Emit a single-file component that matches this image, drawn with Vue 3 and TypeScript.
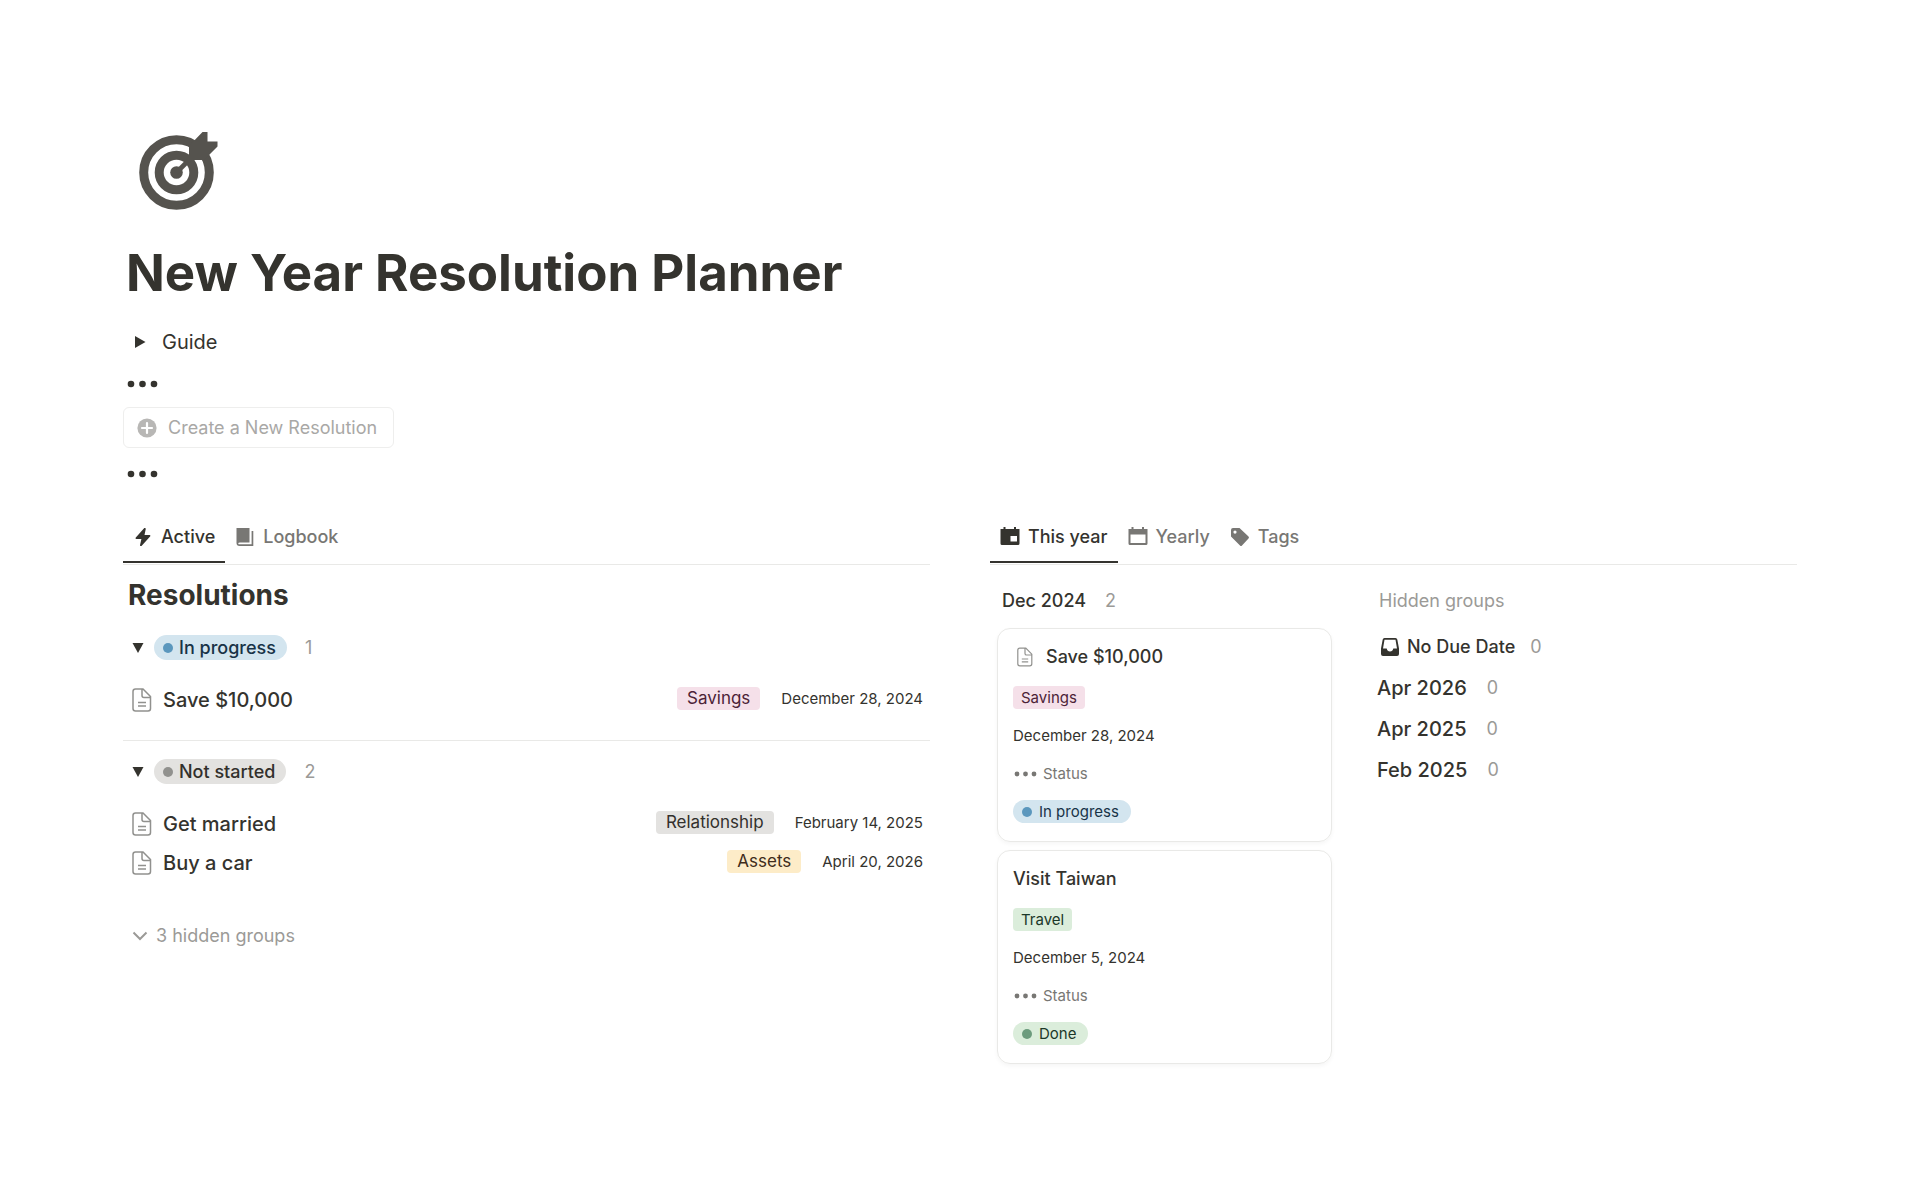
<script setup lang="ts">
interface Entry {
  title: string
  tag: string
  tone: string
  date: string
}

interface Group {
  status: string
  tone: string
  entries: Entry[]
}

interface Card extends Entry {
  hasPage: boolean
  status: string
  statusTone: string
}

const groups: Group[] = [
  {
    status: 'In progress',
    tone: 'blue',
    entries: [{ title: 'Save $10,000', tag: 'Savings', tone: 'pink', date: 'December 28, 2024' }],
  },
  {
    status: 'Not started',
    tone: 'gray',
    entries: [
      { title: 'Get married', tag: 'Relationship', tone: 'gray', date: 'February 14, 2025' },
      { title: 'Buy a car', tag: 'Assets', tone: 'yellow', date: 'April 20, 2026' },
    ],
  },
]

const cards: Card[] = [
  { title: 'Save $10,000', hasPage: true, tag: 'Savings', tone: 'pink', date: 'December 28, 2024', status: 'In progress', statusTone: 'blue' },
  { title: 'Visit Taiwan', hasPage: false, tag: 'Travel', tone: 'green', date: 'December 5, 2024', status: 'Done', statusTone: 'green' },
]

const hiddenMonths: string[] = ['Apr 2026', 'Apr 2025', 'Feb 2025']
</script>

<template>
  <main class="page">
    <svg class="page-icon" viewBox="0 0 80 80" aria-hidden="true">
      <circle cx="37.500" cy="41.500" r="32.800" fill="none" stroke="currentColor" stroke-width="9" />
      <circle cx="37.500" cy="41.500" r="17.300" fill="none" stroke="currentColor" stroke-width="9" />
      <circle cx="37.500" cy="41.500" r="6.300" fill="currentColor" />
      <path d="M37.500 41.500L54 25" stroke="currentColor" stroke-width="4.6" />
      <path d="M50 15L63.500 1H68.500V10.500H78.500V15.500L65 29H50Z" fill="currentColor" />
    </svg>
    <h1 class="title">New Year Resolution Planner</h1>

    <button class="guide" type="button">
      <svg class="caret" viewBox="0 0 12 12" aria-hidden="true"><path d="M1 0L11.500 6L1 12Z" fill="currentColor" /></svg>
      Guide
    </button>
    <svg class="dots" viewBox="0 0 32 8" aria-hidden="true">
      <circle cx="5" cy="4" r="3.300" /><circle cx="16.500" cy="4" r="3.300" /><circle cx="28" cy="4" r="3.300" />
    </svg>
    <button class="create" type="button">
      <svg class="plus" viewBox="0 0 20 20" aria-hidden="true">
        <circle cx="10" cy="10" r="9.600" fill="currentColor" />
        <path d="M10 5V15M5 10H15" stroke="#fff" stroke-width="2.200" stroke-linecap="round" />
      </svg>
      Create a New Resolution
    </button>
    <svg class="dots" viewBox="0 0 32 8" aria-hidden="true">
      <circle cx="5" cy="4" r="3.300" /><circle cx="16.500" cy="4" r="3.300" /><circle cx="28" cy="4" r="3.300" />
    </svg>

    <div class="columns">
      <section>
        <nav class="tabs">
          <button class="tab active" type="button">
            <svg class="tab-icon" viewBox="0 0 20 20" aria-hidden="true">
              <path d="M11.300 1.100L2.600 10.800Q2.100 11.800 3.200 12H8.400L7 18.200Q7.200 19.400 8.500 18.900L17.300 9.200Q17.800 8.200 16.700 8H11.500L12.800 1.800Q12.500 .500 11.300 1.100Z" fill="currentColor" />
            </svg>
            Active
          </button>
          <button class="tab" type="button">
            <svg class="tab-icon" viewBox="0 0 20 20" aria-hidden="true">
              <path d="M1.500 1H14.500V15.500H5Q3.200 15.500 3.200 16.400T5 17.300H16.600V4H18.300V19H4.500Q1.500 19 1.500 16Z" fill="currentColor" />
            </svg>
            Logbook
          </button>
        </nav>
        <h2 class="heading">Resolutions</h2>
        <section v-for="group in groups" :key="group.status" class="group">
          <header class="group-head">
            <button class="toggle" type="button" :aria-label="`Toggle ${group.status}`">
              <svg class="toggle-icon" viewBox="0 0 12 12" aria-hidden="true"><path d="M.500 1H11.500L6 11Z" fill="currentColor" /></svg>
            </button>
            <span class="pill" :class="group.tone"><i class="bullet"></i>{{ group.status }}</span>
            <span class="count">{{ group.entries.length }}</span>
          </header>
          <ul class="rows">
            <li v-for="entry in group.entries" :key="entry.title" class="row">
              <svg class="doc" viewBox="0 0 20 24" aria-hidden="true">
                <path d="M3.500 1H11L18.500 8.500V20.500Q18.500 23 16 23H3.500Q1 23 1 20.500V3.500Q1 1 3.500 1ZM10 1.500V7.500Q10 9.500 12 9.500H18M6 14.500H14M6 18H14" />
              </svg>
              <span class="row-title">{{ entry.title }}</span>
              <span class="tag" :class="entry.tone">{{ entry.tag }}</span>
              <time class="date">{{ entry.date }}</time>
            </li>
          </ul>
        </section>
        <button class="more" type="button">
          <svg class="chevron" viewBox="0 0 16 10" aria-hidden="true"><path d="M1.500 1.500L8 8L14.500 1.500" /></svg>
          3 hidden groups
        </button>
      </section>

      <section>
        <nav class="tabs">
          <button class="tab active" type="button">
            <svg class="tab-icon" viewBox="0 0 20 20" aria-hidden="true">
              <path fill-rule="evenodd" d="M3.500 0H5.500V2H14V0H16V2H19.500V16.500Q19.500 18 18 18H2Q.500 18 .500 16.500V2H3.500ZM10.500 9V14.500H17V9Z" fill="currentColor" />
            </svg>
            This year
          </button>
          <button class="tab" type="button">
            <svg class="tab-icon" viewBox="0 0 20 20" aria-hidden="true">
              <path fill-rule="evenodd" d="M3.500 0H5.500V2H14V0H16V2H19.500V16.500Q19.500 18 18 18H2Q.500 18 .500 16.500V2H3.500ZM2.500 7.500V16H17.500V7.500Z" fill="currentColor" />
            </svg>
            Yearly
          </button>
          <button class="tab" type="button">
            <svg class="tab-icon" viewBox="0 0 20 20" aria-hidden="true">
              <path fill-rule="evenodd" d="M3 1H9.500L18.500 9.500Q19.500 10.500 18.500 11.500L12 18.500Q11 19.500 10 18.500L1 9.500V3Q1 1 3 1ZM5 3.500A1.600 1.600 0 1 0 5 6.700A1.600 1.600 0 1 0 5 3.500Z" fill="currentColor" />
            </svg>
            Tags
          </button>
        </nav>
        <div class="board">
          <section class="lane">
            <h3 class="lane-title">Dec 2024 <span class="count">2</span></h3>
            <article v-for="card in cards" :key="card.title" class="card">
              <h4 class="card-title">
                <svg v-if="card.hasPage" class="card-doc" viewBox="0 0 20 24" aria-hidden="true">
                  <path d="M3.500 1H11L18.500 8.500V20.500Q18.500 23 16 23H3.500Q1 23 1 20.500V3.500Q1 1 3.500 1ZM10 1.500V7.500Q10 9.500 12 9.500H18M6 14.500H14M6 18H14" />
                </svg>
                {{ card.title }}
              </h4>
              <span class="tag small" :class="card.tone">{{ card.tag }}</span>
              <time class="date">{{ card.date }}</time>
              <span class="status-label">
                <svg class="mini-dots" viewBox="0 0 24 6" aria-hidden="true">
                  <circle cx="4" cy="3" r="2.400" /><circle cx="12.500" cy="3" r="2.400" /><circle cx="21" cy="3" r="2.400" />
                </svg>
                Status
              </span>
              <span class="pill small" :class="card.statusTone"><i class="bullet"></i>{{ card.status }}</span>
            </article>
          </section>
          <section>
            <h3 class="hidden-title">Hidden groups</h3>
            <ul class="hidden-list">
              <li class="hidden-item no-date">
                <svg class="inbox" viewBox="0 0 20 20" aria-hidden="true">
                  <path fill-rule="evenodd" d="M4.500 1H15.500Q17 1 17.300 2.500L19 11.500V17Q19 19 17 19H3Q1 19 1 17V11.500L2.700 2.500Q3 1 4.500 1ZM4.500 2.800L3 11.500H6.700Q7.300 14.500 10 14.500T13.300 11.500H17L15.500 2.800Z" fill="currentColor" />
                </svg>
                No Due Date <span class="count">0</span>
              </li>
              <li v-for="month in hiddenMonths" :key="month" class="hidden-item">{{ month }} <span class="count">0</span></li>
            </ul>
          </section>
        </div>
      </section>
    </div>
  </main>
</template>

<style>
body {
  margin: 0;
  background: #fff;
}
</style>

<style scoped>
.page {
  display: flex;
  flex-direction: column;
  align-items: flex-start;
  box-sizing: border-box;
  padding: 131px 123px 120px;
  color: #34332e;
  font-family: Inter, "Liberation Sans", sans-serif;
  font-size: 18px;
  line-height: 24px;
}
button {
  display: flex;
  align-items: center;
  margin: 0;
  padding: 0;
  border: 0;
  background: none;
  color: inherit;
  font: inherit;
  cursor: pointer;
}
h1, h2, h3, h4, ul {
  margin: 0;
  padding: 0;
}
ul {
  list-style: none;
}
svg {
  flex: none;
  display: block;
}
.page-icon {
  width: 80px;
  height: 80px;
  margin-left: 16px;
  color: #55534e;
}
.title {
  margin: 31px 0 0 3px;
  font-size: 51px;
  line-height: 61px;
  font-weight: 700;
}
.guide {
  gap: 16px;
  margin: 24px 0 0 11px;
  font-size: 20px;
  line-height: 30px;
}
.caret {
  width: 12px;
  height: 12px;
}
.dots {
  width: 32px;
  height: 8px;
  margin: 23px 0 0 3px;
  fill: currentColor;
}
.create {
  gap: 11px;
  margin-top: 19px;
  padding: 0 16px 0 13px;
  height: 41px;
  border: 1px solid #eeeeed;
  border-radius: 6px;
  color: #a9a8a6;
}
.plus {
  width: 20px;
  height: 20px;
  color: #b8b7b5;
}
.create + .dots {
  margin-top: 22px;
}
.columns {
  display: grid;
  grid-template-columns: minmax(0, 1fr) minmax(0, 1fr);
  column-gap: 60px;
  width: 100%;
  margin-top: 35px;
}
.tabs {
  display: flex;
  height: 51px;
  border-bottom: 1px solid #e9e9e7;
}
.tab {
  box-sizing: border-box;
  gap: 8px;
  height: 50px;
  padding: 0 10px;
  border-bottom: 2px solid transparent;
  color: #787774;
  font-weight: 500;
}
.tab.active {
  border-bottom-color: #34332e;
  color: #34332e;
}
.tab-icon {
  width: 20px;
  height: 20px;
}
.heading {
  margin: 12px 0 0 5px;
  font-size: 28px;
  line-height: 36px;
  font-weight: 700;
}
.group-head {
  display: flex;
  align-items: center;
  height: 25px;
  margin-top: 22px;
}
.toggle {
  padding: 0 10px 0 9px;
}
.toggle-icon {
  width: 12px;
  height: 12px;
}
.pill {
  display: inline-flex;
  align-items: center;
  gap: 6px;
  height: 25px;
  padding: 0 11px 0 9px;
  border-radius: 13px;
  font-weight: 500;
}
.bullet {
  width: 10px;
  height: 10px;
  border-radius: 50%;
}
.pill.small {
  gap: 7px;
  height: 23px;
  font-size: 15px;
  font-weight: 400;
  padding-right: 12px;
}
.blue { background: #d3e5ef; color: #183347; }
.gray { background: #e3e2e0; color: #32302c; }
.pink { background: #f5e0e9; color: #4c2337; }
.yellow { background: #fdecc8; color: #402c1b; }
.green { background: #dbeddb; color: #1c3829; }
.blue .bullet { background: #5b97bd; }
.gray .bullet { background: #91918e; }
.green .bullet { background: #6c9b7d; }
.count {
  margin-left: 18px;
  color: #9b9a97;
  font-size: 18px;
  font-weight: 400;
}
.rows {
  padding-top: 20px;
}
.row {
  display: flex;
  align-items: center;
  height: 39px;
  padding: 0 7px 0 9px;
}
.doc {
  width: 20px;
  height: 24px;
}
.doc, .card-doc {
  fill: none;
  stroke: #91918e;
  stroke-width: 1.500;
}
.row-title {
  flex: 1;
  margin-left: 11px;
  font-size: 20px;
  font-weight: 500;
}
.tag {
  height: 23px;
  padding: 0 10px;
  border-radius: 4px;
  font-size: 17px;
  line-height: 23px;
}
.tag.small {
  padding: 0 8px;
  font-size: 15px;
}
.date {
  font-size: 15px;
  line-height: 23px;
}
.row .tag, .row .date {
  margin-bottom: 2px;
}
.row .date {
  margin-left: 21px;
}
.group + .group {
  margin-top: 21px;
  border-top: 1px solid #e9e9e7;
}
.group + .group .group-head {
  margin-top: 18px;
}
.more {
  gap: 8px;
  margin: 42px 0 0 9px;
  color: #9b9a97;
}
.chevron {
  width: 16px;
  height: 10px;
  fill: none;
  stroke: currentColor;
  stroke-width: 2;
}
.board {
  display: flex;
  align-items: flex-start;
  gap: 45px;
  padding: 24px 0 0 7px;
}
.lane {
  display: flex;
  flex-direction: column;
  gap: 8px;
  flex: 0 0 335px;
}
.lane-title {
  margin: 0 0 7px 5px;
  font-size: 18px;
  font-weight: 500;
}
.lane-title .count {
  margin-left: 14px;
}
.card {
  display: flex;
  flex-direction: column;
  align-items: flex-start;
  gap: 15px;
  box-sizing: border-box;
  padding: 14px 14px 18px 15px;
  border: 1px solid #e9e9e7;
  border-radius: 13px;
  box-shadow: 0 2px 4px rgba(15, 15, 15, 0.04);
}
.card-title {
  display: flex;
  align-items: center;
  gap: 13px;
  height: 27px;
  margin-bottom: 1px;
  font-size: 18px;
  font-weight: 500;
}
.card-doc {
  width: 16px;
  height: 20px;
  margin-left: 4px;
}
.status-label {
  display: flex;
  align-items: center;
  gap: 6px;
  color: #787774;
  font-size: 15px;
  line-height: 23px;
}
.mini-dots {
  width: 24px;
  height: 6px;
  fill: currentColor;
}
.hidden-title {
  padding-left: 2px;
  color: #9b9a97;
  font-size: 18px;
  font-weight: 400;
}
.hidden-list {
  padding-top: 13px;
}
.hidden-item {
  display: flex;
  align-items: center;
  height: 41px;
  font-size: 20px;
  font-weight: 500;
}
.hidden-item .count {
  margin-left: 20px;
}
.hidden-item.no-date {
  font-size: 18px;
}
.inbox {
  width: 20px;
  height: 20px;
  margin: 0 7px 0 3px;
}
.hidden-item.no-date .count {
  margin-left: 15px;
}
</style>
